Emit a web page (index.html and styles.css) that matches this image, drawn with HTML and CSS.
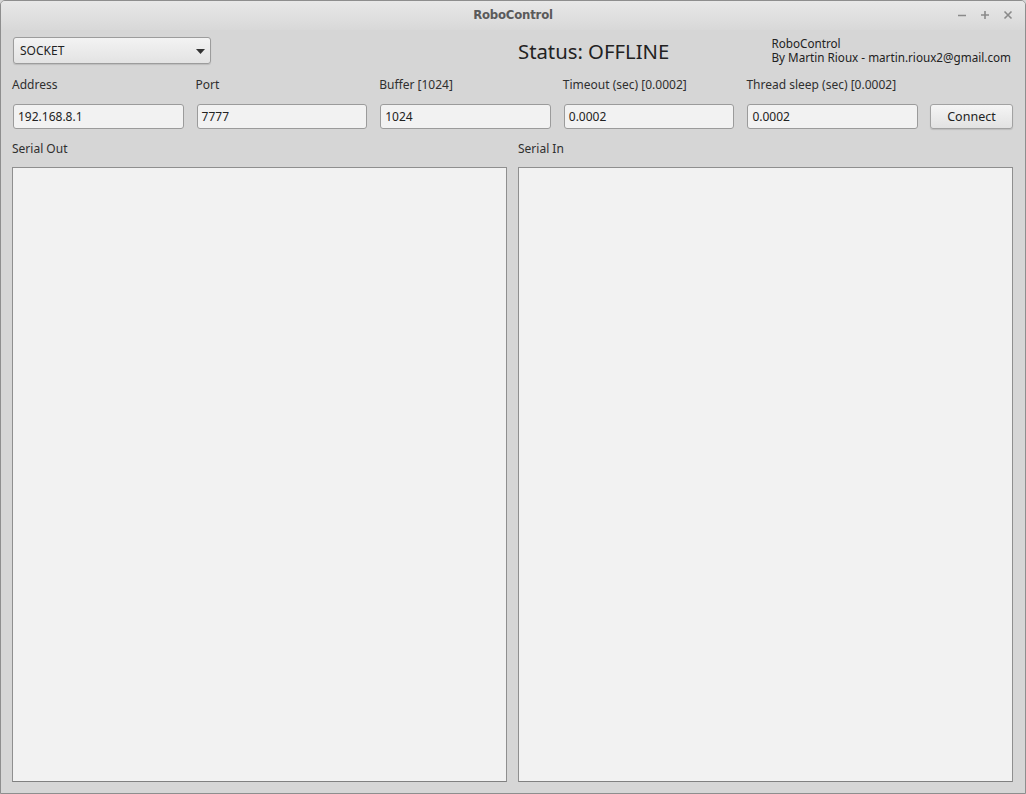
FILE: index.html
```html
<!DOCTYPE html>
<html>
<head>
<meta charset="utf-8">
<title>RoboControl</title>
<link rel="stylesheet" href="styles.css">
</head>
<body>
<div class="window">
  <div class="titlebar">
    <span class="title">RoboControl</span>
    <div class="wm-buttons">
      <svg class="wm" width="10" height="10" viewBox="0 0 10 10"><path d="M1 5.5h8" stroke="#8a8a8a" stroke-width="1.6"/></svg>
      <svg class="wm" width="10" height="10" viewBox="0 0 10 10"><path d="M1 5h8M5 1v8" stroke="#8a8a8a" stroke-width="1.6"/></svg>
      <svg class="wm" width="10" height="10" viewBox="0 0 10 10"><path d="M1.5 1.5l7 7M8.5 1.5l-7 7" stroke="#8a8a8a" stroke-width="1.6"/></svg>
    </div>
  </div>
  <div class="content">
    <div class="top-row">
      <div class="combo"><span>SOCKET</span><svg width="9" height="5" viewBox="0 0 9 5"><path d="M0 0h9L4.5 5z" fill="#333"/></svg></div>
      <div class="status">Status: OFFLINE</div>
      <div class="credits"><div>RoboControl</div><div>By Martin Rioux - martin.rioux2@gmail.com</div></div>
    </div>
    <div class="fields">
      <div class="field"><label>Address</label><div class="input">192.168.8.1</div></div>
      <div class="field"><label>Port</label><div class="input">7777</div></div>
      <div class="field"><label>Buffer [1024]</label><div class="input">1024</div></div>
      <div class="field"><label>Timeout (sec) [0.0002]</label><div class="input">0.0002</div></div>
      <div class="field"><label>Thread sleep (sec) [0.0002]</label><div class="input">0.0002</div></div>
      <div class="field btn-field"><button class="button">Connect</button></div>
    </div>
    <div class="serials">
      <div class="serial"><label>Serial Out</label><div class="textarea"></div></div>
      <div class="serial"><label>Serial In</label><div class="textarea"></div></div>
    </div>
  </div>
</div>
</body>
</html>
```
FILE: styles.css
```css
* { box-sizing: border-box; }
html, body { margin: 0; padding: 0; background: #d6d6d6; }
body { font-family: "Noto Sans", "Open Sans", sans-serif; color: #2f2f2f; }
.window {
  width: 1026px; height: 794px;
  border: 1px solid #8e8e8e;
  border-radius: 5px 5px 0 0;
  background: #d6d6d6;
  display: flex; flex-direction: column;
  overflow: hidden;
}
.titlebar {
  height: 29px; flex: none;
  position: relative;
  display: flex; align-items: center; justify-content: center;
  background: linear-gradient(#e8e8e8, #d8d8d8);
}
.title {
  font-family: "DejaVu Sans Condensed", "DejaVu Sans", sans-serif;
  font-weight: bold; font-size: 13px; color: #5a5a5a;
  letter-spacing: -0.2px;
  margin-top: -2px;
}
.wm-buttons {
  position: absolute; right: 12px; top: 9px;
  display: flex; gap: 13px;
}
.wm { display: block; }
.content {
  flex: 1;
  display: flex; flex-direction: column;
  padding: 7px 12px 11px 11px;
}
.top-row { display: flex; align-items: flex-start; height: 30px; }
.combo {
  margin-left: 1px;
  width: 198px; height: 27px;
  border: 1px solid #9c9c9c; border-radius: 3px;
  background: linear-gradient(#f3f3f3, #e3e3e3);
  box-shadow: 0 1px 1px rgba(0,0,0,0.12);
  display: flex; align-items: center; justify-content: space-between;
  padding: 0 5px 0 6px;
  font-size: 12px; color: #222;
}
.combo svg { display: block; margin-top: 1px; }
.status {
  margin-left: 307px; margin-top: 1px;
  font-size: 20.3px; color: #222; line-height: 26px;
}
.credits {
  margin-left: auto; margin-right: 2px; margin-top: -1px;
  font-size: 11.7px; line-height: 14px; color: #222;
  white-space: nowrap;
}
.fields { display: flex; gap: 12px; margin-top: 10px; }
.field { flex: 1; display: flex; flex-direction: column; min-width: 0; }
.field label { font-size: 12px; line-height: 16px; height: 16px; margin-bottom: 11px; white-space: nowrap; color: #2f2f2f; }
.input {
  margin-left: 1px;
  height: 25px;
  border: 1px solid #9b9b9b; border-radius: 3px;
  background: #f2f2f2;
  font-size: 12px; line-height: 23px; padding: 0 4px;
  color: #222;
}
.btn-field { flex: none; width: 83px; justify-content: flex-end; }
.button {
  font-family: inherit;
  height: 25px; width: 83px;
  border: 1px solid #a2a2a2; border-radius: 3px;
  background: linear-gradient(#f5f5f5, #e2e2e2);
  box-shadow: 0 1px 1px rgba(0,0,0,0.12);
  font-size: 12.5px; color: #222;
  padding: 0;
}
.serials { flex: 1; display: flex; gap: 11px; margin-top: 12px; }
.serial { flex: 1; display: flex; flex-direction: column; }
.serial label { font-size: 12px; line-height: 16px; height: 16px; margin-bottom: 10px; color: #2f2f2f; }
.textarea {
  flex: 1;
  border: 1px solid #8f8f8f;
  border-bottom-color: #808080;
  background: #f2f2f2;
}
```
